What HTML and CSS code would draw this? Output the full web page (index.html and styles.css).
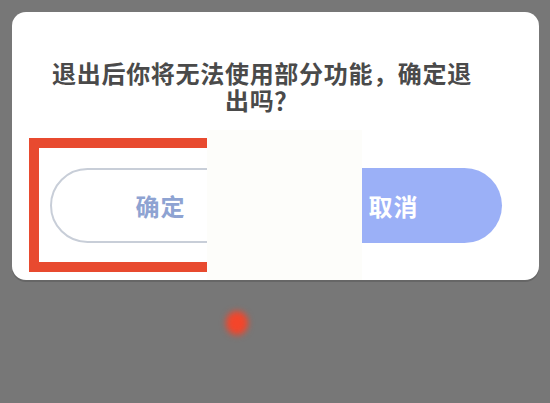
FILE: index.html
```html
<!DOCTYPE html>
<html lang="zh-CN">
<head>
    <meta charset="UTF-8">
    <meta name="viewport" content="width=device-width, initial-scale=1">
    <title>退出确认</title>
    <link rel="stylesheet" href="styles.css">
</head>
<body>
    <div class="dialog">
        <p class="dialog-msg">退出后你将无法使用部分功能，确定退出吗？</p>
        <div class="dialog-actions">
            <button class="btn btn-ok">确定</button>
            <button class="btn btn-cancel">取消</button>
        </div>
        <!-- annotations drawn over the screenshot -->
        <div class="mark-box"></div>
        <div class="cover"></div>
    </div>
    <div class="tap-dot"></div>
</body>
</html>
```

FILE: styles.css
```css
body {
    margin: 0;
    height: 403px;
    background: #777777;
    font-family: "Noto Sans CJK SC", "Noto Sans", sans-serif;
    position: relative;
    overflow: hidden;
}
.dialog {
    position: relative;
    margin: 12px 0 0 12px;
    width: 527px;
    height: 268px;
    background: #fff;
    border-radius: 14px;
    box-shadow: 0 2px 0 #666;
    box-sizing: border-box;
    padding-top: 47px;
}
.dialog-msg {
    margin: 0 0 0 35px;
    width: 430px;
    font-size: 24px;
    line-height: 27px;
    letter-spacing: 0.7px;
    font-weight: bold;
    color: #4a4a4a;
    text-align: center;
}
.dialog-actions {
    display: flex;
    gap: 14px;
    padding: 0 37px 0 38px;
    margin-top: 55px;
}
.btn {
    flex: 1;
    height: 75px;
    border-radius: 38px;
    font-family: inherit;
    font-size: 24px;
    font-weight: bold;
    letter-spacing: 1px;
    cursor: pointer;
}
.btn-ok {
    background: #fff;
    border: 2px solid #c8ced8;
    color: #8ea3d2;
}
.btn-cancel {
    background: #9bb0f7;
    border: none;
    color: #fff;
}
.mark-box {
    position: absolute;
    left: 17px;
    top: 126px;
    width: 200px;
    height: 134px;
    box-sizing: border-box;
    border: 10px solid #e84a2f;
}
.cover {
    position: absolute;
    left: 195px;
    top: 118px;
    width: 155px;
    height: 150px;
    background: #fdfdfa;
}
.tap-dot {
    position: absolute;
    left: 226px;
    top: 311px;
    width: 22px;
    height: 24px;
    border-radius: 50%;
    background: #f4452a;
    filter: blur(3px);
}
```
